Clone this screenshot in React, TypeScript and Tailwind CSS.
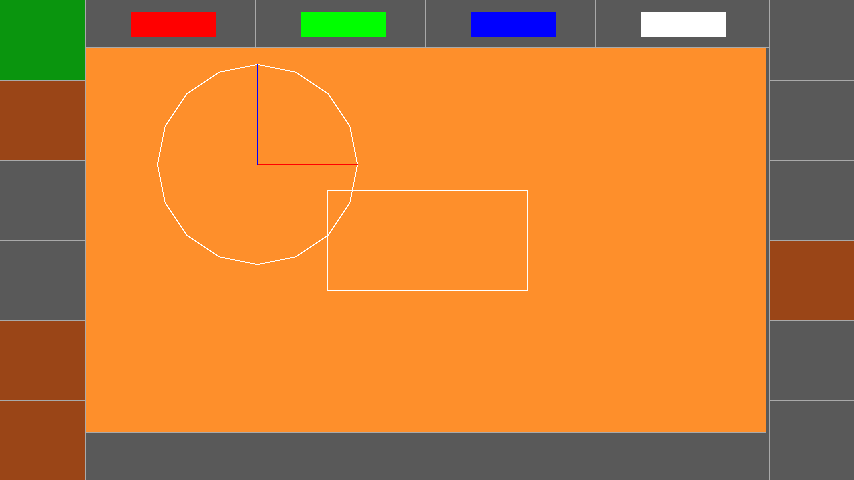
import React from "react";

const LINE = "border-[#a9a9a9]";

function polygonPoints(cx: number, cy: number, r: number, n: number) {
  const pts: string[] = [];
  for (let i = 0; i < n; i++) {
    const a = (i * 2 * Math.PI) / n;
    pts.push(`${(cx + r * Math.cos(a)).toFixed(2)},${(cy - r * Math.sin(a)).toFixed(2)}`);
  }
  return pts.join(" ");
}

export default function App() {
  const left = ["bg-[#0a950e]", "bg-[#9a4517]", "bg-[#595959]", "bg-[#595959]", "bg-[#9a4517]", "bg-[#9a4517]"];
  const right = ["bg-[#595959]", "bg-[#595959]", "bg-[#595959]", "bg-[#9a4517]", "bg-[#595959]", "bg-[#595959]"];
  return (
    <div className="w-[854px] h-[480px] flex bg-[#595959] overflow-hidden">
      {/* left column */}
      <div className={`w-[86px] h-[480px] flex flex-col border-r ${LINE} shrink-0`}>
        {left.map((c, i) => (
          <div key={i} className={`h-[80px] ${c} ${i > 0 ? `border-t ${LINE}` : ""}`} />
        ))}
      </div>
      {/* middle */}
      <div className="w-[683px] h-[480px] flex flex-col shrink-0">
        <div className={`h-[48px] flex border-b ${LINE}`}>
          <div className={`w-[170px] h-full border-r ${LINE} pl-[45px] pt-[12px]`}>
            <div className="w-[85px] h-[25px] bg-[#ff0000]" />
          </div>
          <div className={`w-[170px] h-full border-r ${LINE} pl-[45px] pt-[12px]`}>
            <div className="w-[85px] h-[25px] bg-[#00ff00]" />
          </div>
          <div className={`w-[170px] h-full border-r ${LINE} pl-[45px] pt-[12px]`}>
            <div className="w-[85px] h-[25px] bg-[#0000ff]" />
          </div>
          <div className="w-[173px] h-full pl-[45px] pt-[12px]">
            <div className="w-[85px] h-[25px] bg-[#ffffff]" />
          </div>
        </div>
        <div className={`w-[680px] h-[385px] bg-[#fe8f2b] border-b ${LINE} relative`}>
          <svg width="680" height="384" className="absolute left-0 top-0" shapeRendering="crispEdges">
            <polygon points={polygonPoints(171.5, 116.5, 100, 16)} fill="none" stroke="#ffffff" strokeWidth="1" />
            <rect x="241.5" y="142.5" width="200" height="100" fill="none" stroke="#ffffff" strokeWidth="1" />
            <line x1="171.5" y1="16" x2="171.5" y2="116.5" stroke="#0000ff" strokeWidth="1" />
            <line x1="171.5" y1="116.5" x2="271.5" y2="116.5" stroke="#ff0000" strokeWidth="1" />
          </svg>
        </div>
        <div className="flex-1" />
      </div>
      {/* right column */}
      <div className={`w-[85px] h-[480px] flex flex-col border-l ${LINE} shrink-0`}>
        {right.map((c, i) => (
          <div key={i} className={`h-[80px] ${c} ${i > 0 ? `border-t ${LINE}` : ""}`} />
        ))}
      </div>
    </div>
  );
}
